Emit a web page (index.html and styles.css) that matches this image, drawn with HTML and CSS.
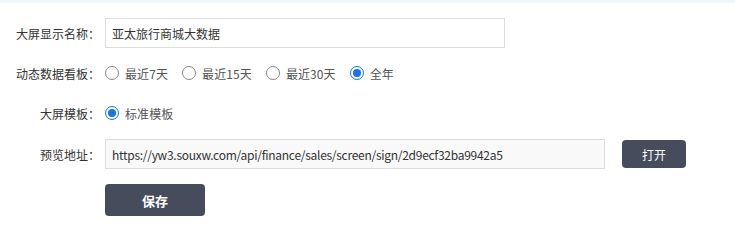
FILE: index.html
```html
<!DOCTYPE html>
<html lang="zh-CN">
<head>
<meta charset="utf-8">
<title>大屏设置</title>
<link rel="stylesheet" href="styles.css">
</head>
<body>
<div class="topbar"></div>
<form class="form">
  <div class="row">
    <label class="label">大屏显示名称：</label>
    <div class="field"><input class="input" type="text" value="亚太旅行商城大数据"></div>
  </div>
  <div class="row">
    <label class="label">动态数据看板：</label>
    <div class="field radios">
      <span class="radio"><span class="dot"></span><span class="rtext">最近7天</span></span>
      <span class="radio"><span class="dot"></span><span class="rtext">最近15天</span></span>
      <span class="radio"><span class="dot"></span><span class="rtext">最近30天</span></span>
      <span class="radio on"><span class="dot"></span><span class="rtext">全年</span></span>
    </div>
  </div>
  <div class="row">
    <label class="label">大屏模板：</label>
    <div class="field radios">
      <span class="radio on"><span class="dot"></span><span class="rtext">标准模板</span></span>
    </div>
  </div>
  <div class="row row-url">
    <label class="label">预览地址：</label>
    <div class="field">
      <input class="input input-url" type="text" readonly value="https://yw3.souxw.com/api/finance/sales/screen/sign/2d9ecf32ba9942a5">
      <button type="button" class="btn btn-open">打开</button>
    </div>
  </div>
  <div class="row row-save">
    <div class="label"></div>
    <div class="field"><button type="button" class="btn btn-save">保存</button></div>
  </div>
</form>
</body>
</html>
```
FILE: styles.css
```css
html, body {
  margin: 0;
  padding: 0;
  background: #fff;
}
body {
  font-family: "Noto Sans CJK SC", "Noto Sans", sans-serif;
  font-size: 12px;
  color: #333;
}
.topbar {
  height: 3px;
  background: #f2f6fb;
}
.form {
  padding-top: 15px;
}
.row {
  display: flex;
  align-items: center;
  height: 30px;
  margin-bottom: 10px;
}
.row-url {
  margin-top: 11px;
  margin-bottom: 15px;
}
.row-save {
  height: 32px;
}
.label {
  width: 100px;
  flex: none;
  text-align: right;
  color: #333;
  box-sizing: border-box;
}
.field {
  margin-left: 5px;
  display: flex;
  align-items: center;
  height: 100%;
}
.input {
  box-sizing: border-box;
  width: 400px;
  height: 30px;
  border: 1px solid #dddddd;
  padding: 0 6px;
  font-family: inherit;
  font-size: 12px;
  color: #333;
  outline: none;
  background: #fff;
}
.input-url {
  width: 500px;
  background: #f9f9f9;
  letter-spacing: -0.28px;
}
.radios {
  gap: 14px;
}
.radio {
  display: flex;
  align-items: center;
  gap: 6px;
  color: #555;
}
.rtext {
  letter-spacing: 0.1px;
}
.dot {
  box-sizing: border-box;
  width: 14px;
  height: 14px;
  border-radius: 50%;
  border: 1px solid #888;
  background: #fff;
  position: relative;
}
.radio.on .dot {
  border: 1.5px solid #1a73e8;
}
.radio.on .dot::after {
  content: "";
  position: absolute;
  left: 50%;
  top: 50%;
  width: 8px;
  height: 8px;
  margin: -4px 0 0 -4px;
  border-radius: 50%;
  background: #1a73e8;
}
.btn {
  border: none;
  background: #464c5c;
  color: #fff;
  font-family: inherit;
  border-radius: 4px;
  cursor: pointer;
  padding: 0;
}
.btn-open {
  margin-left: 17px;
  width: 64px;
  height: 28px;
  font-size: 12px;
}
.btn-save {
  width: 100px;
  height: 32px;
  font-size: 13px;
  font-weight: bold;
}
```
